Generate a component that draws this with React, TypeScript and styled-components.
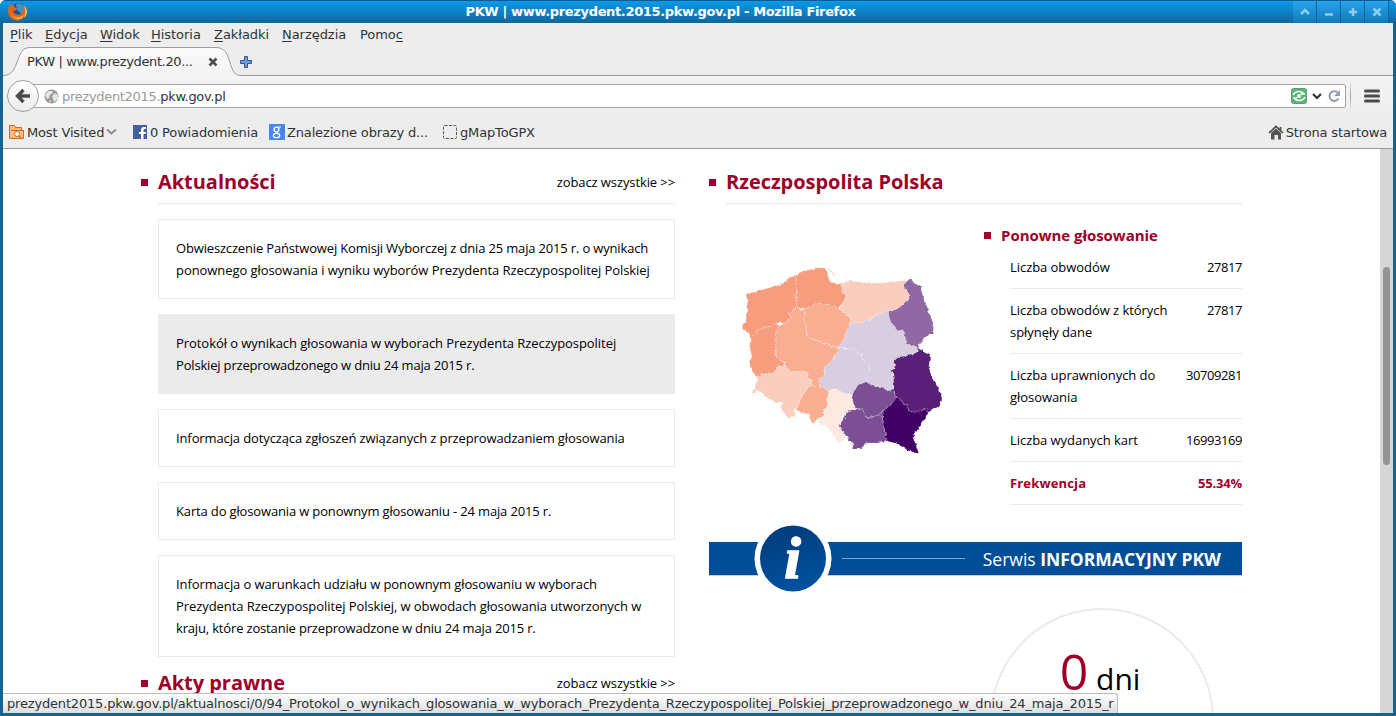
import React from "react";
import styled, { createGlobalStyle } from "styled-components";

const Global = createGlobalStyle`
  * { box-sizing: border-box; }
  body { margin: 0; background: #fff; overflow: hidden; }
`;

const Window = styled.div`
  position: relative;
  display: flex;
  flex-direction: column;
  width: 1396px;
  height: 716px;
  padding: 0 3px 3px;
  overflow: hidden;
  border-radius: 6px 6px 0 0;
  background: #16638d;
  font-family: "DejaVu Sans", sans-serif;
  font-size: 13px;
  color: #2e3436;
`;

const TitleBar = styled.header`
  display: flex;
  flex: none;
  align-items: center;
  height: 23px;
  margin: 0 -3px;
  padding: 0 7px 0 8px;
  border-top: 1px solid #0b5d90;
  background: linear-gradient(#0c98ea, #0c84c8 45%, #12679a);
`;
const Title = styled.h1`
  flex: 1;
  margin: 0;
  text-align: center;
  font-size: 13px;
  letter-spacing: -0.35px;
  line-height: 22px;
  color: #fff;
`;
const WinButton = styled.div`
  display: flex;
  align-items: center;
  justify-content: center;
  width: 24px;
  height: 22px;
  border-right: 1px solid #0c639a;
  background: linear-gradient(#27a5f0, #1179b7);
`;

const MenuBar = styled.nav`
  display: flex;
  flex: none;
  gap: 14px;
  height: 24px;
  padding: 0 7px;
  line-height: 23px;
  background: #ededed;
`;
const MenuItem = styled.span<{ $w: number }>`
  width: ${(p) => p.$w}px;
  white-space: nowrap;
  letter-spacing: -0.04px;
  u { text-underline-offset: 2px; }
`;

const TabStrip = styled.div`
  position: relative;
  display: flex;
  flex: none;
  align-items: center;
  height: 29px;
  padding-left: 24px;
  background: #ededed;
`;
const TabShape = styled.svg`
  position: absolute;
  left: 0;
  top: 0;
`;
const TabLabel = styled.span`
  position: relative;
  width: 181px;
  letter-spacing: -0.37px;
  white-space: nowrap;
`;
const TabIcon = styled.svg`
  position: relative;
  margin-right: 21px;
`;

const NavBar = styled.div`
  display: flex;
  flex: none;
  align-items: center;
  height: 40px;
  padding: 0 13px 0 4px;
  background: linear-gradient(#f4f4f4, #ededed);
`;
const BackButton = styled.div`
  display: flex;
  position: relative;
  z-index: 1;
  align-items: center;
  justify-content: center;
  width: 32px;
  height: 32px;
  border: 1px solid #9aa0a6;
  border-radius: 50%;
  background: linear-gradient(#fff, #ececec);
`;
const UrlField = styled.div`
  display: flex;
  flex: 1;
  align-items: center;
  height: 24px;
  margin-left: -8px;
  padding: 0 1px 0 12px;
  border: 1px solid #a3a3a3;
  border-radius: 0 2px 2px 0;
  background: #fff;
`;
const Url = styled.span`
  flex: 1;
  padding: 1px 0 0 3px;
  letter-spacing: -0.31px;
  line-height: 22px;
`;
const UrlDim = styled.span`color: #9a9a9a;`;
const NavDivider = styled.div`
  width: 1px;
  height: 30px;
  margin: 0 13px 0 4px;
  background: linear-gradient(#eee, #98a0ab, #eee);
`;

const BookmarkBar = styled.div`
  display: flex;
  flex: none;
  align-items: center;
  height: 33px;
  padding: 0 6px 0 5px;
  border-bottom: 1px solid #9b9b9b;
  background: #ededed;
  letter-spacing: -0.15px;
  white-space: nowrap;
`;
const Bookmark = styled.span<{ $w?: number }>`
  display: flex;
  align-items: center;
  gap: 2px;
  ${(p) => (p.$w ? `width: ${p.$w}px;` : "margin-left: auto;")}
`;

const Viewport = styled.main`
  display: flex;
  flex: 1;
  min-height: 0;
  overflow: hidden;
  background: #fff;
  font-family: "Open Sans", sans-serif;
  line-height: 22px;
  color: #000;
`;
const Page = styled.div`
  display: flex;
  flex: 1;
  gap: 34px;
  padding: 11px 0 0 138px;
`;
const Scrollbar = styled.div`
  width: 13px;
  padding: 118px 3px 0;
  background: #d6d6d6;
`;
const Thumb = styled.div`
  width: 7px;
  height: 198px;
  border-radius: 4px;
  background: #949494;
`;
const Column = styled.section<{ $w: number }>`
  flex: none;
  width: ${(p) => p.$w}px;
`;
const Heading = styled.div`
  display: flex;
  align-items: center;
  height: 44px;
  &::before {
    content: "";
    width: 7px;
    height: 7px;
    margin-right: 10px;
    background: #9e0029;
  }
`;
const HeadingLine = styled.div`
  display: flex;
  flex: 1;
  align-items: center;
  justify-content: space-between;
  height: 44px;
  border-bottom: 1px solid #ebebeb;
`;
const HeadingText = styled.h2`
  margin: 0;
  font-size: 20px;
  letter-spacing: -0.04px;
  color: #9e0029;
`;
const SeeAll = styled.a`font-size: 13px; letter-spacing: -0.1px;`;
const Cards = styled.div`
  display: flex;
  flex-direction: column;
  gap: 15px;
  margin: 15px 0 4px 17px;
`;
const Card = styled.article<{ $active?: boolean }>`
  padding: 17px;
  border: 1px solid #ebebeb;
  background: ${(p) => (p.$active ? "#ebebeb" : "#fff")};
  white-space: nowrap;
`;
const CardLine = styled.div<{ $track: number }>`
  letter-spacing: ${(p) => p.$track}px;
`;

const Results = styled.div`
  display: flex;
  height: 321px;
`;
const Map = styled.svg`margin: 61px 0 0 29px;`;
const Stats = styled.div`
  width: 258px;
  margin: 20px 0 0 auto;
`;
const StatsHeading = styled.h3`
  display: flex;
  align-items: center;
  height: 22px;
  margin: 0;
  font-size: 15px;
  letter-spacing: -0.04px;
  color: #9e0029;
  &::before {
    content: "";
    width: 7px;
    height: 7px;
    margin-right: 10px;
    background: #9e0029;
  }
`;
const StatRow = styled.div<{ $strong?: boolean }>`
  display: flex;
  justify-content: space-between;
  margin-left: 26px;
  padding: 10px 0;
  border-bottom: 1px solid #ebebeb;
  white-space: pre-line;
  ${(p) => p.$strong && "color: #9e0029; font-weight: 700;"}
`;
const StatLabel = styled.span<{ $strong?: boolean }>`
  letter-spacing: ${(p) => (p.$strong ? 0.15 : -0.05)}px;
`;
const StatValue = styled.span<{ $strong?: boolean }>`
  letter-spacing: ${(p) => (p.$strong ? -0.2 : -0.42)}px;
`;
const Banner = styled.div`
  display: flex;
  align-items: center;
  height: 33px;
  margin-top: 17px;
  padding: 0 21px 0 45px;
  background: #004d98;
  box-shadow: 0 0.5px 0 #7fa6cc;
  color: #fff;
  font-size: 17.5px;
`;
const BannerRule = styled.div`
  width: 123px;
  height: 1px;
  margin: 0 auto 0 10px;
  background: #7fa6cc;
`;
const Countdown = styled.div`
  width: 224px;
  height: 224px;
  margin: 33px 0 0 281px;
  padding: 36px 4px 0 0;
  border: 2px solid #ebebeb;
  border-radius: 50%;
  text-align: center;
  font-size: 30px;
  line-height: 50px;
  b { font-size: 50px; font-weight: 400; color: #9e0029; }
`;

const StatusBar = styled.div`
  position: absolute;
  left: 3px;
  bottom: 3px;
  width: 1115px;
  height: 20px;
  padding-left: 4px;
  border: solid #bdbdbd;
  border-width: 1px 1px 0 0;
  border-radius: 0 3px 0 0;
  background: linear-gradient(#fff, #dedede);
  letter-spacing: -0.177px;
  line-height: 20px;
  white-space: nowrap;
`;

const regions: [string, string][] = [
  ["#f79d7d", "746,294 765,289 783,284 790,277 795,276 797,288 796,295 797,306 793,310 788,313 792,317 785,323 777,323 772,326 763,328 757,331 753,335 751,337 747,332 742,328 742,325 747,321 746,315 748,310"],
  ["#f79d7d", "751,337 753,335 757,331 763,328 772,326 777,323 779,326 776,330 775,338 776,348 775,353 777,357 784,363 782,367 778,366 773,373 763,374 756,377 754,373 751,371 751,365 749,362 752,357 749,347 752,340"],
  ["#f79d7d", "795,276 803,271 817,268 825,268 828,275 830,282 840,284 848,281 842,285 842,292 847,296 844,301 840,307 840,308 830,305 819,303 813,306 806,309 798,308 797,306 796,295 797,288"],
  ["#f9ad91", "803,310 806,309 813,306 819,303 830,305 840,308 842,312 850,317 851,322 847,330 845,338 838,348 830,346 825,343 817,341 807,336 806,327 804,320 806,315"],
  ["#f9ad91", "797,306 798,308 803,310 806,315 804,320 806,327 807,336 817,341 825,343 830,346 838,348 838,352 831,362 825,367 824,377 819,380 820,387 812,386 812,380 807,378 808,374 803,371 792,372 787,367 784,363 777,357 775,353 776,348 775,338 776,330 779,326 785,323 792,317 788,313 793,310"],
  ["#fbcdbc", "756,377 763,374 773,373 778,366 782,367 784,363 787,367 792,372 803,371 808,374 807,378 812,380 812,386 808,387 803,395 797,408 793,410 796,414 789,419 780,408 783,402 775,402 762,394 760,391 756,389 755,393 752,393 755,386 757,381"],
  ["#f9ad91", "812,386 820,387 830,390 827,398 828,406 824,410 824,416 817,419 814,424 809,419 810,415 803,413 795,409 797,408 803,395 808,387"],
  ["#fde9e1", "830,390 835,389 840,392 848,394 852,396 853,403 856,409 847,411 845,417 839,425 843,432 847,437 842,441 838,443 833,435 827,426 817,423 820,418 824,416 824,410 828,406 827,398"],
  ["#d9cde1", "838,348 855,349 858,353 862,355 863,360 869,365 868,375 866,382 858,385 854,391 852,396 848,394 840,392 835,389 830,390 820,387 819,380 824,377 825,367 831,362 838,352"],
  ["#d9cde1", "851,322 862,322 875,316 888,311 890,320 897,331 903,330 907,344 915,346 918,348 917,352 912,355 898,357 895,360 894,369 890,371 893,373 894,389 887,391 882,387 873,386 866,382 868,375 869,365 863,360 862,355 858,353 855,349 838,348 845,338 847,330"],
  ["#fbcdbc", "848,281 875,283 882,283 908,280 903,287 909,293 909,299 900,307 892,311 888,311 875,316 862,322 851,322 850,317 842,312 840,307 844,301 847,296 842,292 842,285"],
  ["#9068a3", "908,280 912,280 914,283 922,287 923,297 928,310 932,320 934,332 924,338 918,348 915,346 907,344 903,330 897,331 890,320 888,311 892,311 900,307 909,299 909,293 903,287"],
  ["#5a1f78", "918,348 924,352 930,355 929,367 932,378 941,392 942,400 939,407 933,409 929,412 925,409 920,412 910,412 907,405 903,403 898,397 895,396 894,389 893,373 890,371 894,369 895,360 898,357 912,355 917,352"],
  ["#410063", "895,396 898,397 903,403 907,405 910,412 920,412 925,409 929,412 913,437 917,448 919,454 907,450 898,444 887,441 883,425 882,412 895,400"],
  ["#7c4e94", "866,382 873,386 882,387 887,391 894,389 895,396 895,400 882,412 875,416 867,418 863,410 856,409 853,403 852,396 854,391 858,385"],
  ["#7c4e94", "856,409 863,410 867,418 875,416 882,412 883,425 887,441 878,443 867,443 860,449 854,449 852,443 847,437 843,432 839,425 845,417 847,411"],
];

const menu: [string, string, string, number][] = [
  ["", "P", "lik", 21], ["", "E", "dycja", 41], ["", "W", "idok", 37], ["", "H", "istoria", 49],
  ["", "Z", "akładki", 54], ["", "N", "arzędzia", 64], ["Pomo", "c", "", 46],
];

const news: { lines: [string, number][]; active?: boolean }[] = [
  { lines: [["Obwieszczenie Państwowej Komisji Wyborczej z dnia 25 maja 2015 r. o wynikach", -0.165], ["ponownego głosowania i wyniku wyborów Prezydenta Rzeczypospolitej Polskiej", -0.065]] },
  { lines: [["Protokół o wynikach głosowania w wyborach Prezydenta Rzeczypospolitej", -0.055], ["Polskiej przeprowadzonego w dniu 24 maja 2015 r.", -0.175]], active: true },
  { lines: [["Informacja dotycząca zgłoszeń związanych z przeprowadzaniem głosowania", -0.115]] },
  { lines: [["Karta do głosowania w ponownym głosowaniu - 24 maja 2015 r.", -0.15]] },
  { lines: [["Informacja o warunkach udziału w ponownym głosowaniu w wyborach", -0.09], ["Prezydenta Rzeczypospolitej Polskiej, w obwodach głosowania utworzonych w", -0.07], ["kraju, które zostanie przeprowadzone w dniu 24 maja 2015 r.", -0.165]] },
];

const stats: [string, string][] = [
  ["Liczba obwodów", "27817"],
  ["Liczba obwodów z których\nspłynęły dane", "27817"],
  ["Liczba uprawnionych do\ngłosowania", "30709281"],
  ["Liczba wydanych kart", "16993169"],
  ["Frekwencja", "55.34%"],
];

const winGlyphs = ["M2 8l4-4 4 4", "M2 8.500h8", "M6 2v8M2 6h8", "M2.500 2.500l7 7M9.500 2.500l-7 7"];

const Firefox = () => (
  <svg width="20" height="20" viewBox="0 0 20 20">
    <circle cx="10.500" cy="9.500" r="8.500" fill="#1b568f" />
    <path d="M8 2c3-2 8 0 9 5l-3 5-5-4z" fill="#3f93c8" />
    <path d="M1 3l2 1 3-2 0 3 3 1-1 2-3 1c1 4 6 5 9 2 2-2 2-5 1-8 3 2 4 5 3 8-1 5-5 7.500-9 7.500-5 0-9-4-9-9.500z" fill="#e8641b" />
    <path d="M3 11c2 5 8 6 13 2-2 6-10 6-13-2z" fill="#fdb52c" />
    <path d="M16 3c4 4 4 10 0 13 1-3 2-8 0-13z" fill="#f9c73a" />
  </svg>
);

const Chrome = () => (
  <>
    <TitleBar>
      <Firefox />
      <Title>PKW | www.prezydent.2015.pkw.gov.pl - Mozilla Firefox</Title>
      {winGlyphs.map((d) => (
        <WinButton key={d}>
          <svg width="12" height="12" viewBox="0 0 12 12"><path d={d} fill="none" stroke="#8bcdf3" strokeWidth="2.600" /></svg>
        </WinButton>
      ))}
    </TitleBar>
    <MenuBar>
      {menu.map(([a, u, b, w]) => <MenuItem key={u} $w={w}>{a}<u>{u}</u>{b}</MenuItem>)}
    </MenuBar>
    <TabStrip>
      <TabShape width="1390" height="29">
        <defs><linearGradient id="tab" x2="0" y2="1"><stop stopColor="#fafafa" /><stop offset="1" stopColor="#f3f3f3" /></linearGradient></defs>
        <path d="M0 29C18 29 11 1 27 1H213C231 1 223 29 238 29Z" fill="url(#tab)" />
        <path d="M0 28.500C18 28.500 11 .500 27 .500H213C231 .500 223 28.500 238 28.500H1390" fill="none" stroke="#9b9b9b" />
      </TabShape>
      <TabLabel>PKW | www.prezydent.20...</TabLabel>
      <TabIcon width="10" height="10"><path d="M1.500 1.500l7 7M8.500 1.500l-7 7" stroke="#4c4c4c" strokeWidth="2.600" /></TabIcon>
      <TabIcon width="14" height="14"><path d="M5.500 1.500h3v4h4v3h-4v4h-3v-4h-4v-3h4z" fill="#6d9ad5" stroke="#2d5b9c" /></TabIcon>
    </TabStrip>
    <NavBar>
      <BackButton>
        <svg width="16" height="16" viewBox="0 0 16 16"><path d="M8.500 2L2.500 8l6 6M3 8h12" fill="none" stroke="#4b4b4b" strokeWidth="3.400" /></svg>
      </BackButton>
      <UrlField>
        <svg width="15" height="15" viewBox="0 0 15 15"><circle cx="7.500" cy="7.500" r="7" fill="#999" /><path d="M1 6l3-4 4 0 1 2-3 2-1 3-2 1zM8 7l3-3 3 2 0 4-4 3-1-3zM5 11l2 1-1 2z" fill="#e4e4e4" /></svg>
        <Url><UrlDim>prezydent2015.</UrlDim>pkw.gov.pl</Url>
        <svg width="54" height="18" viewBox="0 0 54 18">
          <rect x="1.500" y="1.500" width="15" height="15" rx="2" fill="#58b778" stroke="#629c6e" />
          <circle cx="9" cy="9" r="2" fill="#fff" />
          <path d="M3 8c2-4 8-5 11-1M15 10c-2 4-8 5-11 1M11 7h4M3 11h4" fill="none" stroke="#fff" strokeWidth="1.600" />
          <path d="M23 7l4 4 4-4" fill="none" stroke="#333" strokeWidth="2.200" />
          <path d="M47.500 5.500a4.800 4.800 0 1 0 1 6" fill="none" stroke="#909fae" strokeWidth="2" /><path d="M50 3v6h-6z" fill="#909fae" />
        </svg>
      </UrlField>
      <NavDivider />
      <svg width="16" height="14"><path d="M1.500 2h13M1.500 7h13M1.500 12h13" stroke="#4a4a4a" strokeWidth="3" strokeLinecap="round" /></svg>
    </NavBar>
    <BookmarkBar>
      <Bookmark $w={124}>
        <svg width="17" height="16" viewBox="0 0 17 16"><path d="M1.500 14.500v-13h5l1 2h6v3h2v8z" fill="#f4bd85" stroke="#cf6c1b" /><path d="M3 6.500h12" stroke="#cf6c1b" /><circle cx="9" cy="10" r="2.500" fill="#fff" stroke="#cf6c1b" /><path d="M11 12l2 2" stroke="#cf6c1b" strokeWidth="1.500" /></svg>
        Most Visited
        <svg width="11" height="8"><path d="M1 1.500l4.500 4 4.500-4" fill="none" stroke="#8b8b8b" strokeWidth="2" /></svg>
      </Bookmark>
      <Bookmark $w={137}>
        <svg width="16" height="14"><rect x="1" width="14" height="14" fill="#4460a0" /><path d="M9 14V9H7V7h2V5q0-3 3-3h2v2h-1.500q-1 0-1 1v2H14l-.5 2h-2v5z" fill="#fff" /></svg>
        0 Powiadomienia
      </Bookmark>
      <Bookmark $w={173}>
        <svg width="16" height="16"><rect width="16" height="16" rx="1" fill="#4787ed" /><circle cx="7.500" cy="5.500" r="2.400" fill="none" stroke="#fff" strokeWidth="1.400" /><ellipse cx="7.500" cy="11.500" rx="3.200" ry="2.200" fill="none" stroke="#fff" strokeWidth="1.300" /><path d="M9 3h3M8 8l1 1.500" stroke="#fff" /></svg>
        Znalezione obrazy d...
      </Bookmark>
      <Bookmark $w={100}>
        <svg width="16" height="14"><rect x="1.500" y=".5" width="13" height="13" rx="1" fill="none" stroke="#555" strokeDasharray="3 1.500" /></svg>
        gMapToGPX
      </Bookmark>
      <Bookmark>
        <svg width="16" height="15"><path d="M1 8l7-6.500L15 8M12.500 2v4" fill="none" stroke="#4a4a4a" strokeWidth="1.700" /><path d="M3 8l5-4.500L13 8v6.500h-3V10H6.500v4.500H3z" fill="#555" /></svg>
        Strona startowa
      </Bookmark>
    </BookmarkBar>
  </>
);

export default function App() {
  return (
    <>
      <Global />
      <Window>
        <Chrome />
        <Viewport>
          <Page>
            <Column $w={534}>
              <Heading><HeadingLine><HeadingText>Aktualności</HeadingText><SeeAll>zobacz wszystkie &gt;&gt;</SeeAll></HeadingLine></Heading>
              <Cards>
                {news.map((n) => (
                  <Card key={n.lines[0][0]} $active={n.active}>
                    {n.lines.map(([text, track]) => <CardLine key={text} $track={track}>{text}</CardLine>)}
                  </Card>
                ))}
              </Cards>
              <Heading><HeadingLine><HeadingText>Akty prawne</HeadingText><SeeAll>zobacz wszystkie &gt;&gt;</SeeAll></HeadingLine></Heading>
            </Column>
            <Column $w={533}>
              <Heading><HeadingLine><HeadingText>Rzeczpospolita Polska</HeadingText></HeadingLine></Heading>
              <Results>
                <Map width="210" height="194" viewBox="738 265 210 194">
                  <defs>
                    <filter id="border" colorInterpolationFilters="sRGB">
                      <feTurbulence type="fractalNoise" baseFrequency=".28" numOctaves="2" seed="4" />
                      <feDisplacementMap in="SourceGraphic" scale="4" xChannelSelector="R" yChannelSelector="G" />
                    </filter>
                  </defs>
                  <g filter="url(#border)">
                    {regions.map(([fill, points]) => (
                      <polygon key={points} points={points} fill={fill} stroke="#fff" strokeOpacity=".25" strokeWidth=".8" strokeLinejoin="round" />
                    ))}
                  </g>
                  <path d="M828 269l5 4 1 3" fill="none" stroke="#fbcdbc" />
                </Map>
                <Stats>
                  <StatsHeading>Ponowne głosowanie</StatsHeading>
                  {stats.map(([k, v]) => {
                    const strong = k === "Frekwencja";
                    return <StatRow key={k} $strong={strong}><StatLabel $strong={strong}>{k}</StatLabel><StatValue $strong={strong}>{v}</StatValue></StatRow>;
                  })}
                </Stats>
              </Results>
              <Banner>
                <svg width="78" height="78" viewBox="0 0 78 78">
                  <defs>
                    <linearGradient id="info" x2=".3" y2="1"><stop stopColor="#003a78" /><stop offset="1" stopColor="#00509c" /></linearGradient>
                  </defs>
                  <circle cx="39" cy="38.500" r="38.500" fill="#fff" />
                  <circle cx="39" cy="38.500" r="33" fill="url(#info)" />
                  <text x="38.500" y="58" textAnchor="middle" fontFamily="Liberation Serif, serif" fontSize="60" fontWeight="700" fontStyle="italic" fill="#fff" stroke="#fff" strokeWidth="1.500" strokeLinejoin="round">i</text>
                </svg>
                <BannerRule />
                <span>Serwis <strong>INFORMACYJNY PKW</strong></span>
              </Banner>
              <Countdown><b>0</b> dni</Countdown>
            </Column>
          </Page>
          <Scrollbar><Thumb /></Scrollbar>
        </Viewport>
        <StatusBar>prezydent2015.pkw.gov.pl/aktualnosci/0/94_Protokol_o_wynikach_glosowania_w_wyborach_Prezydenta_Rzeczypospolitej_Polskiej_przeprowadzonego_w_dniu_24_maja_2015_r</StatusBar>
      </Window>
    </>
  );
}
